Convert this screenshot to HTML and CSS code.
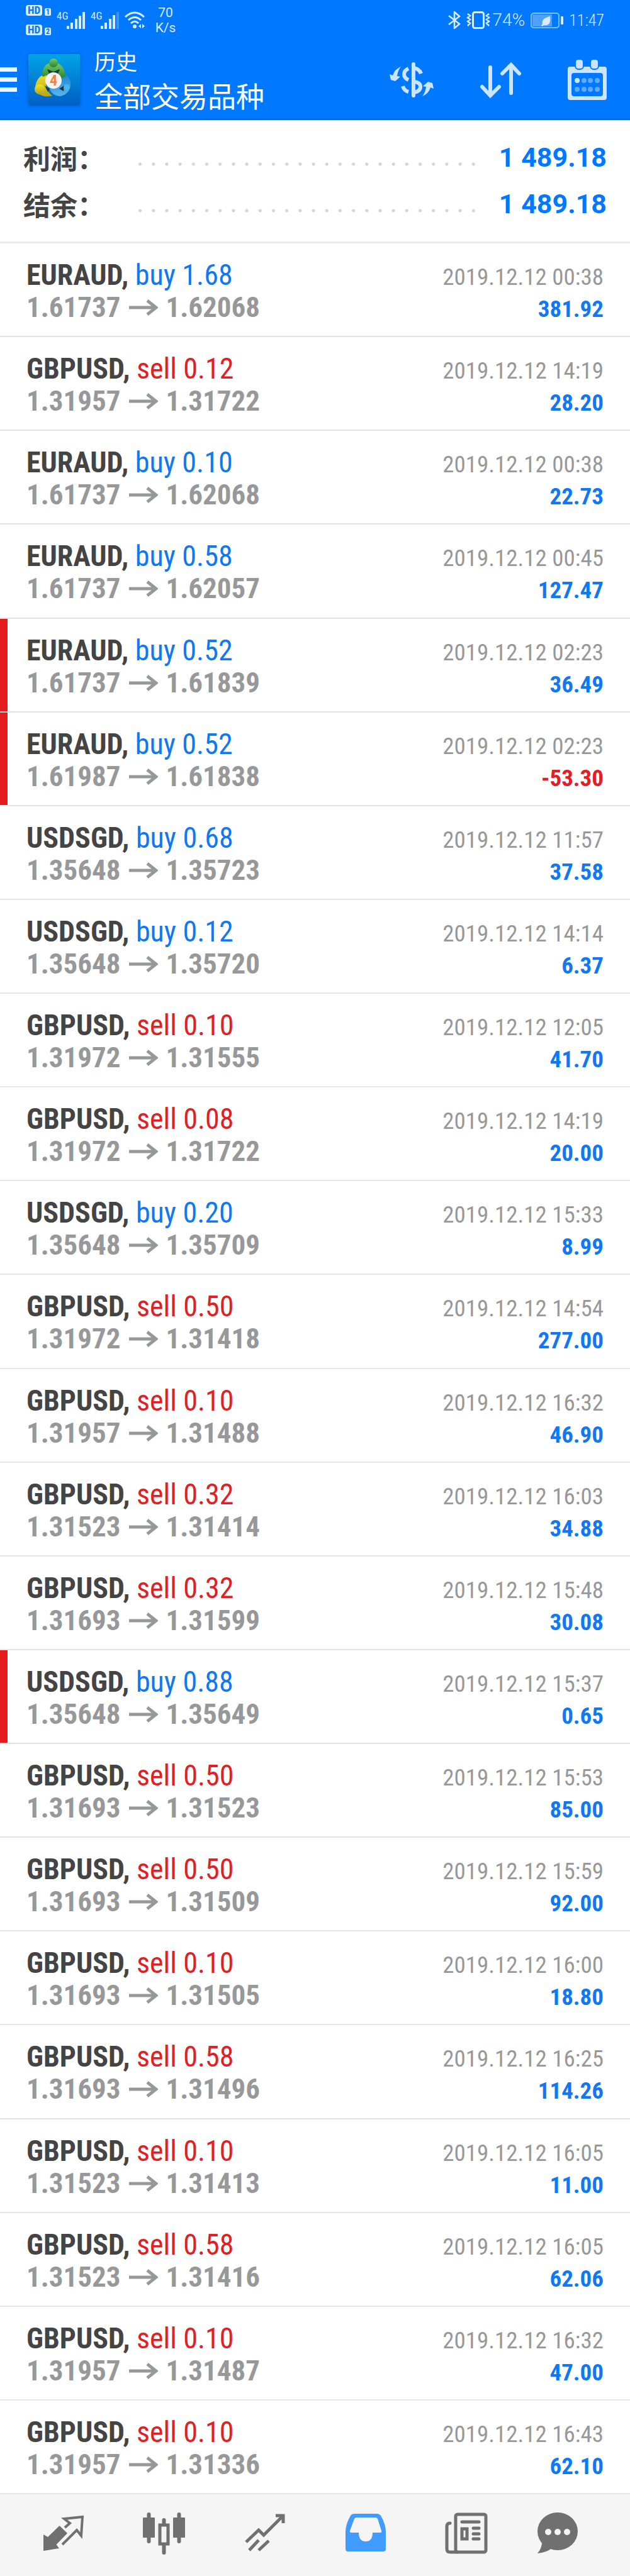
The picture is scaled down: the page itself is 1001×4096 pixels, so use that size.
FILE: index.html
```
<!DOCTYPE html>
<html lang="zh-CN">
<head>
  <meta charset="UTF-8">
  <meta name="viewport" content="width=device-width, initial-scale=1.0">
  <title>历史</title>
  <link rel="stylesheet" href="styles.css">
</head>
<body>
  <header class="header">
    <div class="status-bar">
      <div class="hd-group">
        <div class="hd-row"><span class="hd">HD</span><span class="sim">1</span></div>
        <div class="hd-row"><span class="hd">HD</span><span class="sim">2</span></div>
      </div>
      <div class="signal">
        <span class="net">4G</span>
        <svg width="29" height="27" viewBox="0 0 29 27">
          <path d="M0 22h4v5H0zM6 17h4v10H6zM13 11h4v16h-4zM19 6h4v21h-4zM25 0h4v27h-4z"/>
        </svg>
      </div>
      <div class="signal">
        <span class="net">4G</span>
        <svg width="29" height="27" viewBox="0 0 29 27">
          <path d="M0 22h4v5H0zM6 17h4v10H6zM13 11h4v16h-4zM19 5h4v22h-4z"/>
          <path d="M25 0h4v27h-4z" opacity=".25"/>
        </svg>
      </div>
      <svg class="wifi" width="32" height="28" viewBox="0 0 32 28">
        <g fill="none" stroke="#d9ecff" stroke-width="3">
          <path d="M1 9Q16-5 31 9"/>
          <path d="M6 14Q16 5 26 14"/>
          <path d="M10 19Q16 13 22 19"/>
        </g>
        <circle cx="16" cy="24" r="3"/>
        <path d="M26 20v7l-4-3.500zM28 20v7l4-3.500z"/>
      </svg>
      <div class="speed">70<br>K/s</div>
      <div class="status-right">
        <svg width="20" height="28" viewBox="0 0 20 28" fill="none" stroke="#d9ecff" stroke-width="2.500">
          <path d="M1 7l17 13-8 7V1l8 7L1 21"/>
        </svg>
        <svg width="38" height="28" viewBox="0 0 38 28" fill="none" stroke="#d9ecff">
          <rect x="10.500" y="1.500" width="17" height="25" rx="3" stroke-width="3"/>
          <path d="M2 4l4 3-4 3 4 3-4 3 4 3-4 4M36 4l-4 3 4 3-4 3 4 3-4 3 4 4" stroke-width="2.500"/>
        </svg>
        <span class="percent">74%</span>
        <svg class="battery" width="52" height="25" viewBox="0 0 52 25">
          <rect x="3" y="3" width="31" height="19" fill="#4fa0ff"/>
          <rect x="1" y="1" width="44" height="23" rx="4" fill="none" stroke="#7fc0ff" stroke-width="2"/>
          <rect x="48" y="6" width="4" height="13" rx="1"/>
          <path d="M31 6q2 16-10 14l-3 2-1-1 2-3q-2-9 12-12z"/>
        </svg>
        <span class="clock">11:47</span>
      </div>
    </div>

    <div class="app-bar">
      <button class="menu" aria-label="菜单"><span></span><span></span><span></span></button>
      <svg class="logo" width="82" height="82" viewBox="0 0 82 82">
        <defs>
          <linearGradient id="tile" x1="0" y1="0" x2="0" y2="1">
            <stop offset="0" stop-color="#00a3e6"/><stop offset="1" stop-color="#005fc4"/>
          </linearGradient>
          <linearGradient id="green" x1="0" y1="0" x2="0" y2="1">
            <stop offset="0" stop-color="#7cc96a"/><stop offset="1" stop-color="#1f8430"/>
          </linearGradient>
          <linearGradient id="yellow" x1="0" y1="0" x2="0" y2="1">
            <stop offset="0" stop-color="#f0e02a"/><stop offset="1" stop-color="#b3a51e"/>
          </linearGradient>
          <linearGradient id="blue" x1="0" y1="0" x2="0" y2="1">
            <stop offset="0" stop-color="#1b80cf"/><stop offset="1" stop-color="#55b6f0"/>
          </linearGradient>
        </defs>
        <rect width="82" height="82" rx="2" fill="url(#tile)"/>
        <path d="M54 30q14 5 13 19-1 14-16 18-12 0-17-11z" fill="url(#blue)"/>
        <path d="M38 66q-12 4-22-3-8-8-3-19 4-10 16-13l-1 17q1 12 10 18z" fill="url(#yellow)"/>
        <path d="M22 35q0-17 12-21h12q12 5 13 22l-8 3-14-10-13 7z" fill="url(#green)"/>
        <path d="M30 24l10 4 10-4-3 7H33zM26 50l8 6-3 4zM49 55l8-5-1 9z" fill="#173b3a"/>
        <circle cx="40" cy="14" r="7" fill="url(#green)"/>
        <circle cx="18" cy="56" r="8" fill="url(#yellow)"/>
        <circle cx="61" cy="53" r="5" fill="#4bb4ee"/>
        <circle cx="40" cy="42" r="13" fill="#f7f3f0"/>
        <text x="40" y="50" class="logo-number">4</text>
      </svg>
      <div class="titles">
        <p class="title">历史</p>
        <h1 class="subtitle">全部交易品种</h1>
      </div>
      <div class="actions">
        <button aria-label="货币">
          <svg width="70" height="64" viewBox="0 -5 70 64">
            <g fill="none" stroke="#cce5ff" stroke-width="6">
              <path d="M38 2V52" stroke-linecap="round"/>
              <path d="M38 8Q47 9 50 17M30 9Q23 12 23 18T30 27M39 30Q49 31 49 38T39 47M21 37Q23 44 30 46"/>
            </g>
            <path d="M18 6Q8 10 5 20L0 18 2 27 9 29 17 22 12 21Q13 12 18 6zM52 53Q62 49 65 39L70 41 68 32 61 30 53 37 58 38Q57 47 52 53z"/>
          </svg>
        </button>
        <button aria-label="排序">
          <svg width="65" height="64" viewBox="0 -4 65 64" class="line">
            <path d="M16 8V52M3 39L16 53 30 39M49 49V5M35 18L49 4 62 18"/>
          </svg>
        </button>
        <button aria-label="日期">
          <svg width="62" height="64" viewBox="0 0 62 64">
            <path fill-rule="evenodd" d="M4 11H58Q62 11 62 15V60Q62 64 58 64H4Q0 64 0 60V15Q0 11 4 11zM10 21Q6 21 6 25V54Q6 58 10 58H52Q56 58 56 54V25Q56 21 52 21z"/>
            <g stroke="#0078ff" stroke-width="2">
              <rect x="12" y="-1" width="13" height="16" rx="5"/>
              <rect x="36" y="-1" width="13" height="16" rx="5"/>
            </g>
            <circle cx="15" cy="33" r="4"/>
            <g fill="#5cabff">
              <circle cx="26" cy="33" r="4"/><circle cx="36" cy="33" r="4"/><circle cx="47" cy="33" r="4"/>
              <circle cx="15" cy="47" r="4"/><circle cx="26" cy="47" r="4"/><circle cx="36" cy="47" r="4"/><circle cx="47" cy="47" r="4"/>
            </g>
          </svg>
        </button>
      </div>
    </div>
  </header>

  <section class="summary">
    <div class="summary-row">
      <span class="summary-label">利润：</span>
      <span class="leader"></span>
      <span class="summary-value">1 489.18</span>
    </div>
    <div class="summary-row">
      <span class="summary-label">结余：</span>
      <span class="leader"></span>
      <span class="summary-value">1 489.18</span>
    </div>
  </section>

  <ul class="deals" id="deals"></ul>

  <nav class="tabs">
    <a href="#quotes" aria-label="行情">
      <svg width="66" height="68" viewBox="0 0 66 68">
        <path d="M26.500 21L39 33 21.500 51 26 57 1 61V35L8 39z"/>
        <path d="M35 24L43 17 34 10 63 7 61 37 54 28 31 51" fill="none" stroke="#707070" stroke-width="4"/>
      </svg>
    </a>
    <a href="#charts" aria-label="图表">
      <svg width="68" height="68" viewBox="0 0 68 68">
        <rect y="8" width="19" height="32" rx="1"/>
        <rect x="48" y="8" width="19" height="32" rx="1"/>
        <path d="M9.500 3V46M57.500 3V46M33.500 12V19M33.500 52V64" stroke="#707070" stroke-width="6" stroke-linecap="round"/>
        <rect x="27" y="20" width="13" height="30" fill="none" stroke="#707070" stroke-width="5"/>
      </svg>
    </a>
    <a href="#trade" aria-label="交易">
      <svg width="66" height="68" viewBox="0 0 66 68" class="line trend">
        <path d="M3 47L23 28 31 36 61 6M50 5H62V17M8 60L23 44M23 60L39 45"/>
      </svg>
    </a>
    <a href="#history" class="active" aria-label="历史">
      <svg width="64" height="68" viewBox="0 0 64 68">
        <path fill-rule="evenodd" d="M14 2H50Q54 2 56 5 64 19 64 30V58Q64 62 60 62H4Q0 62 0 58V30Q0 19 8 5 10 2 14 2zM18 8Q15 8 14 10L7 29Q6 32 9 32H21Q21 46 32 46T43 32H55Q58 32 57 29L51 10Q50 8 47 8z"/>
      </svg>
    </a>
    <a href="#news" aria-label="新闻">
      <svg width="68" height="68" viewBox="0 0 68 68" class="line">
        <rect x="17" y="3" width="48" height="60" rx="3"/>
        <path d="M8 17Q3 17 3 22V58Q3 63 8 63H20"/>
        <path d="M27 15H54M45 25H54M45 34H54M45 42H54"/>
        <rect x="27" y="26" width="8" height="16"/>
      </svg>
    </a>
    <a href="#messages" aria-label="消息">
      <svg width="64" height="68" viewBox="0 0 64 68">
        <path d="M7 44Q8 56 0 65 14 64 24 56z"/>
        <ellipse cx="32" cy="30" rx="32" ry="30"/>
        <g fill="#f5f5f5"><circle cx="17" cy="31" r="5"/><circle cx="32" cy="31" r="5"/><circle cx="47" cy="31" r="5"/></g>
      </svg>
    </a>
  </nav>

  <script src="script.js"></script>
</body>
</html>
```
FILE: styles.css
```
:root {
  --blue: #0078ff;
  --buy: #1079f2;
  --sell: #e02024;
  --icon-light: #cce5ff;
  --grey: #979899;
  --line: #e5e5e5;
}
* {
  box-sizing: border-box;
}
body {
  margin: 0;
  min-height: 100vh;
  display: flex;
  flex-direction: column;
  background: #fff;
  color: #444;
  font-family: "Roboto Condensed", Roboto, "Noto Sans CJK SC", sans-serif;
}
p, h1, ul {
  margin: 0;
  padding: 0;
}
button {
  padding: 0;
  border: none;
  background: none;
  cursor: pointer;
}
svg {
  display: block;
}
.line {
  fill: none;
  stroke-width: 5;
  stroke-linecap: round;
}

/* Header */
.header {
  background: var(--blue);
  border-bottom: 2px solid #0068dd;
}
.status-bar {
  display: flex;
  align-items: center;
  height: 64px;
  padding: 0 41px;
  color: #d9ecff;
  fill: #d9ecff;
}
.hd-group {
  display: flex;
  flex-direction: column;
  gap: 14px;
  margin-right: 9px;
}
.hd-row {
  display: flex;
  align-items: flex-end;
  gap: 4px;
}
.hd, .sim {
  border-radius: 4px;
  background: #d9ecff;
  color: var(--blue);
  font-weight: 700;
  text-align: center;
}
.hd {
  width: 26px;
  font-size: 17px;
  line-height: 17px;
}
.sim {
  width: 10px;
  border-radius: 2px;
  font-size: 12px;
  line-height: 12px;
}
.signal {
  display: flex;
  align-items: flex-start;
  margin-right: 9px;
}
.net {
  width: 16px;
  font-size: 17px;
  line-height: 13px;
}
.wifi {
  margin-right: 16px;
}
.speed {
  width: 34px;
  font-family: Roboto, sans-serif;
  font-size: 21px;
  line-height: 24px;
  text-align: center;
}
.status-right {
  display: flex;
  align-items: center;
  margin-left: auto;
  gap: 9px;
}
.percent {
  margin-left: -6px;
  font-family: Roboto, sans-serif;
  font-size: 28px;
  font-weight: 300;
  line-height: 32px;
}
.clock {
  font-size: 26px;
  font-weight: 300;
  line-height: 32px;
}
.app-bar {
  display: flex;
  align-items: center;
  height: 125px;
  padding-right: 37px;
  color: #fff;
}
.menu {
  display: flex;
  flex-direction: column;
  gap: 9px;
  width: 27px;
  margin-right: 18px;
}
.menu span {
  height: 7px;
  background: #eaf5ff;
}
.logo {
  margin-right: 23px;
  box-shadow: 0 0 4px #0058b8;
}
.logo-number {
  fill: #f0873c;
  font-size: 24px;
  font-weight: 700;
  text-anchor: middle;
}
.titles {
  flex: 1;
  font-family: "Noto Sans CJK SC", sans-serif;
}
.title {
  font-size: 34px;
  line-height: 50px;
}
.subtitle {
  font-size: 45px;
  font-weight: 400;
  line-height: 60px;
}
.actions {
  display: flex;
  align-items: center;
  gap: 74px;
  fill: var(--icon-light);
}
.actions .line {
  stroke: var(--icon-light);
  stroke-width: 6;
}

/* Totals */
.summary {
  padding: 22px 37px 23px;
  border-bottom: 3px solid #e9e9e9;
}
.summary-row {
  display: flex;
  align-items: center;
  height: 74px;
}
.summary-label {
  font-family: "Noto Sans CJK SC", sans-serif;
  font-size: 43px;
  font-weight: 700;
  line-height: 60px;
}
.leader {
  flex: 1;
  height: 6px;
  margin: 22px 30px 0 46px;
  background-image: radial-gradient(circle, #d4d4d4 2px, transparent 3px);
  background-size: 21px 6px;
  background-repeat: round no-repeat;
}
.summary-value {
  color: var(--blue);
  font-family: Roboto, sans-serif;
  font-size: 43px;
  font-weight: 700;
}

/* Deals */
.deals {
  flex: 1;
  display: grid;
  grid-auto-rows: 1fr;
  list-style: none;
}
.deal {
  position: relative;
  display: grid;
  grid-template-columns: 1fr auto;
  align-items: baseline;
  align-content: start;
  padding: 24px 42px 19px;
  border-bottom: 2px solid var(--line);
  line-height: 52px;
}
.deal.flagged::before {
  content: "";
  position: absolute;
  left: 0;
  top: 0;
  bottom: 0;
  width: 12px;
  background: #e31b1c;
}
.symbol {
  font-size: 46px;
}
.buy {
  color: var(--buy);
}
.sell {
  color: var(--sell);
}
.prices {
  display: flex;
  align-items: center;
  gap: 13px;
  color: var(--grey);
  font-size: 45px;
  font-weight: 700;
}
.arrow {
  stroke: var(--grey);
  stroke-linecap: butt;
}
.time, .profit {
  font-size: 37px;
  line-height: 44px;
  text-align: right;
}
.time {
  color: var(--grey);
}
.profit {
  color: var(--buy);
  font-weight: 700;
}
.profit.loss {
  color: var(--sell);
}

/* Bottom tabs */
.tabs {
  display: grid;
  grid-template-columns: repeat(5, 16fr) 13fr;
  align-items: center;
  justify-items: center;
  height: 130px;
  padding: 0 50px 4px 21px;
  background: #f5f5f5;
  fill: #707070;
}
.tabs .line {
  stroke: #707070;
}
.tabs .trend {
  stroke-linecap: butt;
}
.tabs .active {
  fill: #409cff;
}
```
FILE: script.js
```
// symbol, side, volume, open price, close price, time, profit, flagged
const deals = [
  ["EURAUD", "buy", "1.68", "1.61737", "1.62068", "00:38", "381.92"],
  ["GBPUSD", "sell", "0.12", "1.31957", "1.31722", "14:19", "28.20"],
  ["EURAUD", "buy", "0.10", "1.61737", "1.62068", "00:38", "22.73"],
  ["EURAUD", "buy", "0.58", "1.61737", "1.62057", "00:45", "127.47"],
  ["EURAUD", "buy", "0.52", "1.61737", "1.61839", "02:23", "36.49", true],
  ["EURAUD", "buy", "0.52", "1.61987", "1.61838", "02:23", "-53.30", true],
  ["USDSGD", "buy", "0.68", "1.35648", "1.35723", "11:57", "37.58"],
  ["USDSGD", "buy", "0.12", "1.35648", "1.35720", "14:14", "6.37"],
  ["GBPUSD", "sell", "0.10", "1.31972", "1.31555", "12:05", "41.70"],
  ["GBPUSD", "sell", "0.08", "1.31972", "1.31722", "14:19", "20.00"],
  ["USDSGD", "buy", "0.20", "1.35648", "1.35709", "15:33", "8.99"],
  ["GBPUSD", "sell", "0.50", "1.31972", "1.31418", "14:54", "277.00"],
  ["GBPUSD", "sell", "0.10", "1.31957", "1.31488", "16:32", "46.90"],
  ["GBPUSD", "sell", "0.32", "1.31523", "1.31414", "16:03", "34.88"],
  ["GBPUSD", "sell", "0.32", "1.31693", "1.31599", "15:48", "30.08"],
  ["USDSGD", "buy", "0.88", "1.35648", "1.35649", "15:37", "0.65", true],
  ["GBPUSD", "sell", "0.50", "1.31693", "1.31523", "15:53", "85.00"],
  ["GBPUSD", "sell", "0.50", "1.31693", "1.31509", "15:59", "92.00"],
  ["GBPUSD", "sell", "0.10", "1.31693", "1.31505", "16:00", "18.80"],
  ["GBPUSD", "sell", "0.58", "1.31693", "1.31496", "16:25", "114.26"],
  ["GBPUSD", "sell", "0.10", "1.31523", "1.31413", "16:05", "11.00"],
  ["GBPUSD", "sell", "0.58", "1.31523", "1.31416", "16:05", "62.06"],
  ["GBPUSD", "sell", "0.10", "1.31957", "1.31487", "16:32", "47.00"],
  ["GBPUSD", "sell", "0.10", "1.31957", "1.31336", "16:43", "62.10"]
];

const arrow = '<svg class="line arrow" width="46" height="26" viewBox="0 0 46 26"><path d="M0 13H43M29 2L43 13 29 24"/></svg>';

document.getElementById("deals").innerHTML = deals.map(([symbol, side, volume, open, close, time, profit, flagged]) => `
  <li class="deal${flagged ? " flagged" : ""}">
    <div class="symbol"><b>${symbol},</b> <span class="${side}">${side} ${volume}</span></div>
    <div class="time">2019.12.12 ${time}</div>
    <div class="prices"><span>${open}</span>${arrow}<span>${close}</span></div>
    <div class="profit${profit < 0 ? " loss" : ""}">${profit}</div>
  </li>`).join("");
```
